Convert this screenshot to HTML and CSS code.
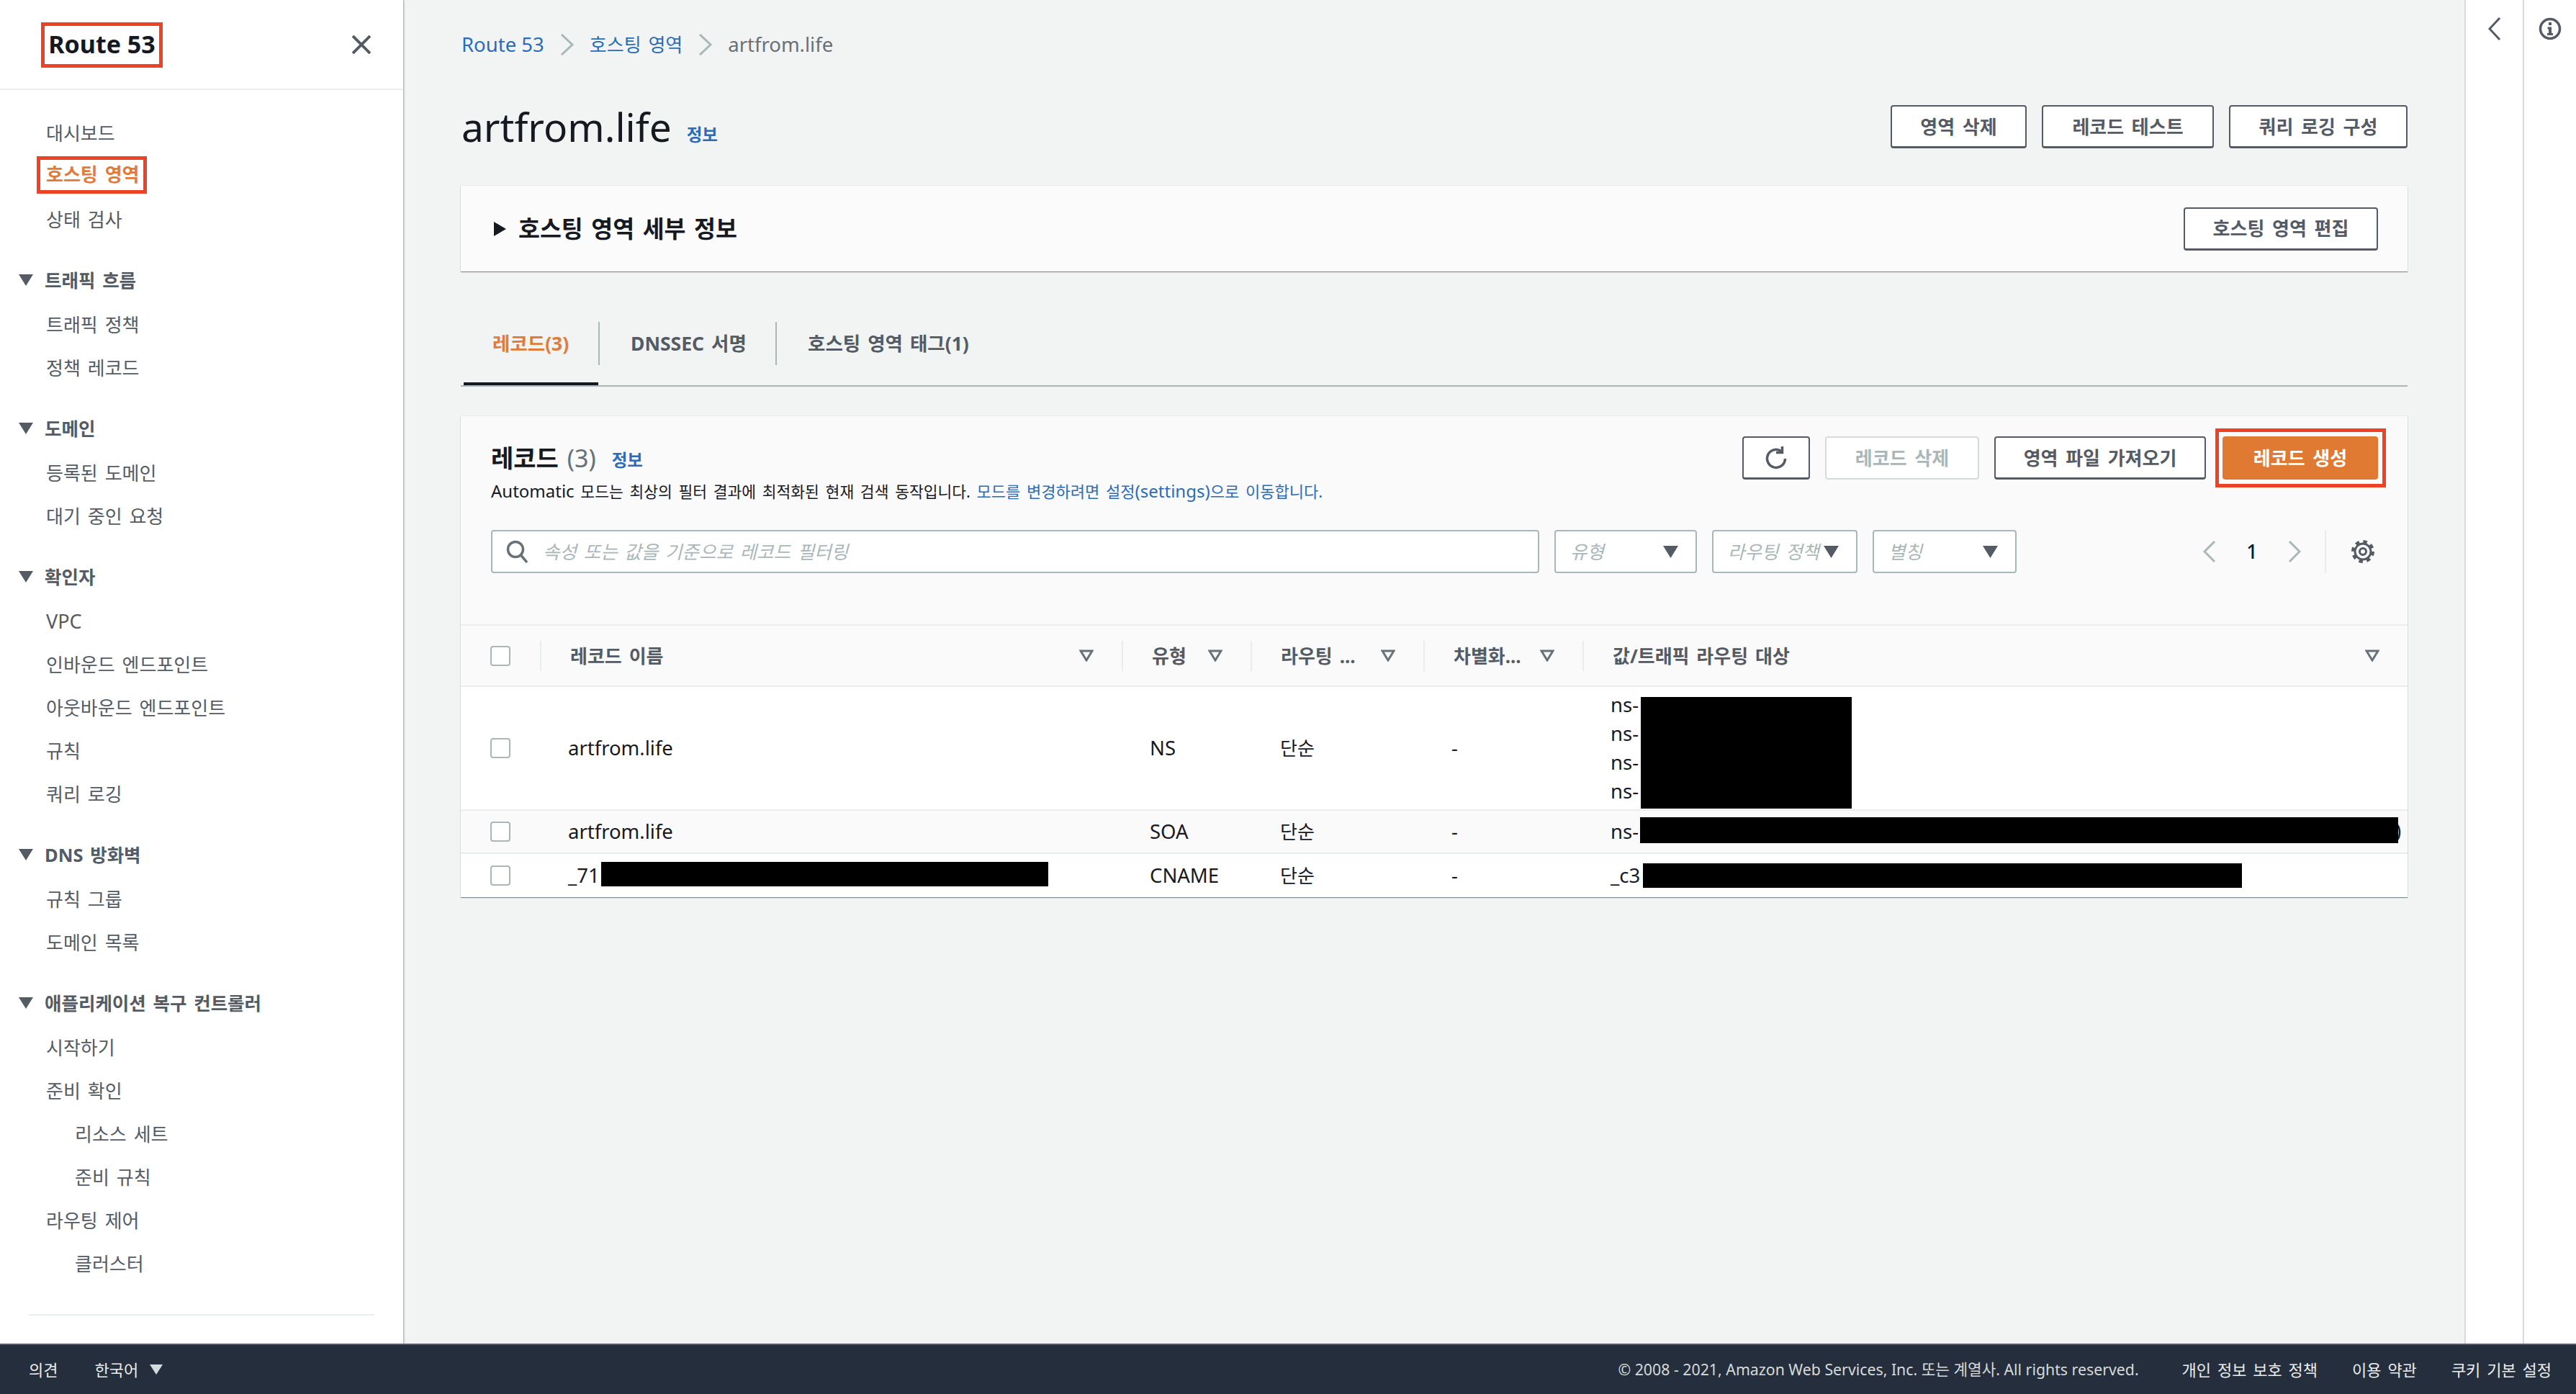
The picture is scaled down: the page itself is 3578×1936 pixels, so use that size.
FILE: index.html
```html
<!DOCTYPE html>
<html lang="ko">
<head>
<meta charset="utf-8">
<title>Route 53</title>
<link rel="stylesheet" href="styles.css">
</head>
<body>
<div class="app">
  <div class="top">
    <aside class="sidebar">
      <div class="side-head">
        <div class="side-title">Route 53</div>
        <svg class="close" viewBox="0 0 26 26"><path d="M1 1L25 25M25 1L1 25"/></svg>
      </div>
      <nav class="nav">
        <a class="item">대시보드</a>
        <a class="item"><span class="current">호스팅 영역</span></a>
        <a class="item">상태 검사</a>
        <div class="group"><svg class="tri" viewBox="0 0 20 16"><path d="M0 0H20L10 16Z"/></svg>트래픽 흐름</div>
        <a class="item">트래픽 정책</a>
        <a class="item">정책 레코드</a>
        <div class="group"><svg class="tri" viewBox="0 0 20 16"><path d="M0 0H20L10 16Z"/></svg>도메인</div>
        <a class="item">등록된 도메인</a>
        <a class="item">대기 중인 요청</a>
        <div class="group"><svg class="tri" viewBox="0 0 20 16"><path d="M0 0H20L10 16Z"/></svg>확인자</div>
        <a class="item item-latin">VPC</a>
        <a class="item">인바운드 엔드포인트</a>
        <a class="item">아웃바운드 엔드포인트</a>
        <a class="item">규칙</a>
        <a class="item">쿼리 로깅</a>
        <div class="group"><svg class="tri" viewBox="0 0 20 16"><path d="M0 0H20L10 16Z"/></svg>DNS 방화벽</div>
        <a class="item">규칙 그룹</a>
        <a class="item">도메인 목록</a>
        <div class="group"><svg class="tri" viewBox="0 0 20 16"><path d="M0 0H20L10 16Z"/></svg>애플리케이션 복구 컨트롤러</div>
        <a class="item">시작하기</a>
        <a class="item">준비 확인</a>
        <a class="item sub">리소스 세트</a>
        <a class="item sub">준비 규칙</a>
        <a class="item">라우팅 제어</a>
        <a class="item sub">클러스터</a>
      </nav>
      <div class="side-rule"></div>
    </aside>

    <main class="main">
      <div class="crumbs">
        <a class="link latin">Route 53</a>
        <svg class="crumb-sep" viewBox="0 0 20 30"><path d="M2 1L17 15L2 29"/></svg>
        <a class="link">호스팅 영역</a>
        <svg class="crumb-sep" viewBox="0 0 20 30"><path d="M2 1L17 15L2 29"/></svg>
        <span class="latin crumb-now">artfrom.life</span>
      </div>

      <div class="title-row">
        <h1 class="page-title">artfrom.life</h1>
        <a class="info info-title">정보</a>
        <div class="actions">
          <button class="btn w-189">영역 삭제</button>
          <button class="btn w-239">레코드 테스트</button>
          <button class="btn w-248">쿼리 로깅 구성</button>
        </div>
      </div>

      <section class="detail">
        <svg class="detail-tri" viewBox="0 0 17 20"><path d="M0 0L17 10L0 20Z"/></svg>
        <h2 class="detail-title">호스팅 영역 세부 정보</h2>
        <button class="btn w-270 push">호스팅 영역 편집</button>
      </section>

      <div class="tabs">
        <div class="tab tab-on">레코드(3)</div>
        <div class="tab tab-2">DNSSEC 서명</div>
        <div class="tab tab-3">호스팅 영역 태그(1)</div>
      </div>

      <section class="records">
        <div class="rec-head">
          <div class="rec-left">
            <div class="rec-title"><b class="rec-name">레코드</b><span class="rec-count">(3)</span><a class="info">정보</a></div>
            <p class="rec-desc"><span class="desc-latin">Automatic</span> 모드는 최상의 필터 결과에 최적화된 현재 검색 동작입니다. <a class="link"><span>모드를 변경하려면 설정</span><span class="desc-latin">(settings)</span><span>으로 이동합니다.</span></a></p>
          </div>
          <div class="rec-actions">
            <button class="btn w-94"><svg class="refresh" viewBox="0 0 32 32"><path d="M23 6.5A12.5 12.5 0 1 0 28.5 17"/><path d="M24.5 0V8.5H16"/></svg></button>
            <button class="btn btn-off w-214">레코드 삭제</button>
            <button class="btn w-294">영역 파일 가져오기</button>
            <div class="mark"><button class="btn btn-go w-216">레코드 생성</button></div>
          </div>
        </div>

        <div class="filters">
          <div class="search">
            <svg class="search-ico" viewBox="0 0 30 32"><circle cx="13" cy="13" r="10.5"/><path d="M20.5 21L29 31"/></svg>
            <span class="ph">속성 또는 값을 기준으로 레코드 필터링</span>
          </div>
          <div class="select w-198"><span class="ph">유형</span><svg class="caret" viewBox="0 0 21 17"><path d="M0 0H21L10.5 17Z"/></svg></div>
          <div class="select w-202"><span class="ph">라우팅 정책</span><svg class="caret" viewBox="0 0 21 17"><path d="M0 0H21L10.5 17Z"/></svg></div>
          <div class="select w-200"><span class="ph">별칭</span><svg class="caret" viewBox="0 0 21 17"><path d="M0 0H21L10.5 17Z"/></svg></div>
          <div class="pager">
            <svg class="page-chev" viewBox="0 0 18 30"><path d="M16 1L2 15L16 29"/></svg>
            <b class="page-no">1</b>
            <svg class="page-chev" viewBox="0 0 18 30"><path d="M2 1L16 15L2 29"/></svg>
            <span class="pager-rule"></span>
            <svg class="gear" viewBox="0 0 32 32"><circle class="gear-teeth" cx="16" cy="16" r="13.5"/><circle class="gear-ring" cx="16" cy="16" r="11"/><circle class="gear-hub" cx="16" cy="16" r="4.5"/></svg>
          </div>
        </div>

        <div class="thead">
          <div class="th th-cb"><span class="cb"></span></div>
          <div class="th"><span>레코드 이름</span><svg class="sort" viewBox="0 0 20 17"><path d="M2 2H18L10 15Z"/></svg></div>
          <div class="th"><span>유형</span><svg class="sort" viewBox="0 0 20 17"><path d="M2 2H18L10 15Z"/></svg></div>
          <div class="th"><span>라우팅 ...</span><svg class="sort" viewBox="0 0 20 17"><path d="M2 2H18L10 15Z"/></svg></div>
          <div class="th"><span>차별화...</span><svg class="sort" viewBox="0 0 20 17"><path d="M2 2H18L10 15Z"/></svg></div>
          <div class="th"><span>값/트래픽 라우팅 대상</span><svg class="sort" viewBox="0 0 20 17"><path d="M2 2H18L10 15Z"/></svg></div>
        </div>

        <div class="row row-tall">
          <div class="td td-cb"><span class="cb"></span></div>
          <div class="td latin">artfrom.life</div>
          <div class="td latin">NS</div>
          <div class="td kr">단순</div>
          <div class="td latin">-</div>
          <div class="td td-val latin">
            <div class="ns">
              <div>ns-</div><div>ns-</div><div>ns-</div><div>ns-</div>
            </div>
            <i class="mask mask-a"></i>
          </div>
        </div>
        <div class="row row-alt">
          <div class="td td-cb"><span class="cb"></span></div>
          <div class="td latin">artfrom.life</div>
          <div class="td latin">SOA</div>
          <div class="td kr">단순</div>
          <div class="td latin">-</div>
          <div class="td td-val latin">ns-<span class="peek">)</span><i class="mask mask-b"></i></div>
        </div>
        <div class="row row-last">
          <div class="td td-cb"><span class="cb"></span></div>
          <div class="td latin">_71<i class="mask mask-n"></i></div>
          <div class="td latin">CNAME</div>
          <div class="td kr">단순</div>
          <div class="td latin">-</div>
          <div class="td td-val latin">_c3<i class="mask mask-c"></i></div>
        </div>
      </section>
    </main>

    <div class="rail rail-a">
      <svg class="rail-chev" viewBox="0 0 18 32"><path d="M16 1L2 16L16 31"/></svg>
    </div>
    <div class="rail rail-b">
      <svg class="rail-info" viewBox="0 0 32 32"><circle cx="16" cy="16" r="13.5"/><path class="i-fill" d="M14 7h4v4h-4zM12.5 13.5H18V22h2v3h-8v-3h2v-5.500h-1.500z"/></svg>
    </div>
  </div>

  <footer class="footer">
    <a class="f-left">의견</a>
    <a class="f-left f-lang">한국어</a>
    <svg class="f-caret" viewBox="0 0 18 14"><path d="M0 0H18L9 14Z"/></svg>
    <span class="copy">© 2008 - 2021, Amazon Web Services, Inc. 또는 계열사. All rights reserved.</span>
    <a class="f-link f-first">개인 정보 보호 정책</a>
    <a class="f-link">이용 약관</a>
    <a class="f-link">쿠키 기본 설정</a>
  </footer>
</div>
</body>
</html>
```

FILE: styles.css
```css
* { box-sizing: border-box; }
html, body { margin: 0; height: 100%; }
body {
  font-family: "Noto Sans", "Noto Sans CJK KR", sans-serif;
  font-size: 26px;
  line-height: 32px;
  color: #16191f;
  background: #f2f3f3;
  word-spacing: .12em;
  overflow: hidden;
}
svg { display: block; flex: none; }
p, h1, h2 { margin: 0; }

.app { height: 100vh; display: flex; flex-direction: column; }
.top { flex: 1; min-height: 0; display: flex; }

/* sidebar */
.sidebar {
  width: 560px;
  flex: none;
  background: #fff;
  box-shadow: 1px 0 2px #9aa0a0;
}
.side-head {
  height: 125px;
  border-bottom: 2px solid #eaeded;
  display: flex;
  align-items: flex-start;
  padding: 31px 45px 0 57px;
  justify-content: space-between;
}
.side-title {
  width: 169px;
  height: 63px;
  border: 5px solid #ee4226;
  font-size: 34px;
  font-weight: 700;
  line-height: 50px;
  text-align: center;
  white-space: nowrap;
  word-spacing: 0;
}
.close { width: 26px; height: 26px; margin-top: 18px; fill: none; stroke: #545b64; stroke-width: 4; }
.nav { padding: 30px 0 0 26px; color: #545b64; }
.item { display: flex; height: 60px; align-items: center; padding-left: 38px; }
.item.sub { padding-left: 78px; }
.item-latin { font-size: 27px; }
.current {
  display: block;
  width: 153px;
  height: 52px;
  margin: -5px 0 0 -13px;
  padding-left: 8px;
  border: 5px solid #ee4226;
  color: #e07b39;
  font-weight: 700;
  line-height: 40px;
  white-space: nowrap;
}
.group { display: flex; align-items: center; height: 60px; margin-top: 24px; margin-bottom: 2px; font-size: 25.500px; font-weight: 700; }
.tri { width: 20px; height: 16px; margin-right: 16px; fill: #545b64; }
.side-rule { height: 2px; background: #eaeded; margin: 40px 40px 0; }

/* main */
.main { flex: 1; min-width: 0; padding: 42px 79px 0 80px; }
.crumbs { display: flex; align-items: center; height: 40px; padding-left: 1px; }
.link { color: #2b6cb8; }
.latin { font-size: 27.500px; word-spacing: 0; }
.crumb-sep { width: 20px; height: 30px; margin: 0 21px 0 22px; fill: none; stroke: #aab7b8; stroke-width: 3; }
.crumb-now { color: #687078; }

.title-row { display: flex; align-items: center; height: 60px; margin-top: 64px; }
.page-title { font-size: 55px; font-weight: 400; line-height: 60px; word-spacing: 0; margin-left: 1px; }
.info { color: #2b6cb8; font-size: 23.500px; font-weight: 700; word-spacing: 0; }
.info-title { margin: 22px 0 0 21px; }
.actions { margin-left: auto; display: flex; gap: 21px; }

.btn {
  display: flex;
  align-items: center;
  justify-content: center;
  height: 60px;
  padding: 0;
  background: #fff;
  border: 2px solid #545b64;
  border-bottom-width: 3px;
  border-radius: 4px;
  color: #545b64;
  font: 700 26px/32px "Noto Sans", "Noto Sans CJK KR", sans-serif;
  word-spacing: .15em;
}
.w-94 { width: 94px; }
.w-189 { width: 189px; }
.w-214 { width: 214px; }
.w-216 { width: 216px; }
.w-239 { width: 239px; }
.w-248 { width: 248px; }
.w-270 { width: 270px; }
.w-294 { width: 294px; }
.btn-off { border: 2px solid #d5dbdb; color: #aab7b8; }
.btn-go { background: #e07a33; border: none; color: #fff; }
.push { margin-left: auto; }
.refresh { width: 32px; height: 32px; fill: none; stroke: #545b64; stroke-width: 3.5; }
.mark { border: 5px solid #ee4226; padding: 6px 6px 6px 5px; margin: -11px -11px -11px -8px; }

.detail {
  display: flex;
  align-items: center;
  height: 119px;
  margin-top: 52px;
  padding: 0 41px 0 46px;
  background: #fbfbfb;
  box-shadow: 0 1px 1px rgba(0, 28, 36, .45), 0 0 1px rgba(0, 28, 36, .2);
}
.detail-tri { width: 17px; height: 20px; fill: #16191f; }
.detail-title { font-size: 32.500px; font-weight: 700; line-height: 40px; margin-left: 17px; }

.tabs {
  display: flex;
  align-items: flex-start;
  height: 90px;
  margin-top: 70px;
  border-bottom: 2px solid #aab7b8;
  font-size: 26.500px;
  font-weight: 700;
  color: #545b64;
}
.tab { height: 60px; line-height: 60px; white-space: nowrap; }
.tab-on {
  position: relative;
  width: 193px;
  padding-left: 44px;
  color: #e07b39;
  border-right: 2px solid #aab7b8;
}
.tab-on::after {
  content: "";
  position: absolute;
  left: 4px;
  right: 0;
  top: 84px;
  height: 4px;
  background: #16191f;
}
.tab-2 { width: 246px; padding-left: 43px; border-right: 2px solid #aab7b8; }
.tab-3 { padding-left: 43px; }

.records {
  margin-top: 41px;
  background: #fafafa;
  box-shadow: 0 1px 1px rgba(0, 28, 36, .45), 0 0 1px rgba(0, 28, 36, .2);
}
.rec-head { display: flex; height: 158px; padding: 28px 41px 0 42px; }
.rec-title { display: flex; align-items: center; height: 60px; }
.rec-name { font-size: 34px; }
.rec-count { font-size: 34px; color: #687078; margin: 0 22px 0 12px; word-spacing: 0; }
.rec-title .info { margin-top: 6px; }
.rec-desc { font-size: 21.500px; line-height: 32px; color: #16191f; white-space: nowrap; }
.rec-desc .link { font-size: 22px; }
.desc-latin { font-size: 24px; word-spacing: 0; }
.rec-actions { margin-left: auto; display: flex; align-items: flex-start; gap: 21px; }

.filters { display: flex; gap: 21px; height: 60px; padding: 0 41px 0 42px; box-sizing: content-box; padding-bottom: 71px; }
.search, .select {
  display: flex;
  align-items: center;
  height: 60px;
  background: #fff;
  border: 2px solid #aab7b8;
  border-radius: 4px;
}
.search { width: 1456px; padding-left: 19px; }
.search-ico { width: 30px; height: 32px; margin-right: 21px; fill: none; stroke: #687078; stroke-width: 3.5; }
.ph { color: #aab7b8; font-size: 25.500px; font-style: italic; white-space: nowrap; }
.select { padding: 0 24px 0 20px; justify-content: space-between; }
.w-198 { width: 198px; }
.w-200 { width: 200px; }
.w-202 { width: 202px; }
.caret { width: 21px; height: 17px; fill: #545b64; }
.pager { margin-left: auto; display: flex; align-items: center; height: 60px; }
.page-chev { width: 18px; height: 30px; fill: none; stroke: #aab7b8; stroke-width: 3; }
.page-no { width: 18px; margin: 0 41px; font-size: 27px; font-weight: 500; text-align: center; }
.pager-rule { width: 2px; height: 60px; background: #eaeded; margin: 0 35px 0 33px; }
.gear { width: 32px; height: 32px; margin-right: 5px; fill: none; stroke: #545b64; }
.gear-teeth { stroke-width: 5; stroke-dasharray: 5.300 5.300; }
.gear-ring { stroke-width: 3; }
.gear-hub { stroke-width: 3; }

.thead, .row { display: grid; grid-template-columns: 110px 808px 179px 240px 221px 1fr; }
.thead {
  height: 87px;
  align-items: center;
  border-top: 2px solid #eaeded;
  border-bottom: 2px solid #eaeded;
  font-weight: 700;
  color: #545b64;
}
.th { display: flex; align-items: center; justify-content: space-between; height: 42px; padding: 0 39px 0 40px; border-left: 2px solid #eaeded; white-space: nowrap; }
.th-cb { border-left: 0; padding: 0 0 0 41px; justify-content: flex-start; }
.sort { width: 20px; height: 17px; fill: none; stroke: #687078; stroke-width: 3; }
.cb { display: block; width: 28px; height: 28px; background: #fff; border: 2px solid #aab7b8; border-radius: 4px; }

.row { background: #fff; height: 60px; border-bottom: 2px solid #eaeded; align-items: center; }
.row-tall { height: 172px; }
.row-alt { background: #fafafa; }
.row-last { border-bottom: 0; height: 60px; }
.td { position: relative; padding-left: 39px; white-space: nowrap; }
.td-cb { padding-left: 41px; }
.kr { padding-left: 41px; }
.ns { line-height: 40px; }
.mask { position: absolute; background: #000; }
.peek { position: absolute; left: 1129px; top: -1px; }
.mask-a { left: 81px; top: 9px; width: 293px; height: 155px; }
.mask-b { left: 80px; top: -4px; width: 1053px; height: 36px; }
.mask-c { left: 84px; top: -1px; width: 832px; height: 34px; }
.mask-n { left: 85px; top: -3px; width: 621px; height: 34px; }

/* rails */
.rail { flex: none; background: #fff; display: flex; justify-content: center; padding-top: 24px; }
.rail-a { width: 81px; border-left: 2px solid #d5dbdb; }
.rail-b { width: 74px; border-left: 2px solid #d5dbdb; }
.rail-chev { width: 18px; height: 32px; fill: none; stroke: #545b64; stroke-width: 3; }
.rail-info { width: 32px; height: 32px; fill: none; stroke: #545b64; stroke-width: 3.500; }
.i-fill { fill: #545b64; stroke: none; }

/* footer */
.footer {
  flex: none;
  display: flex;
  align-items: center;
  height: 70px;
  padding: 0 34px 0 40px;
  background: #252e3c;
  border-top: 2px solid #545b64;
  color: #eaeded;
  font-size: 22px;
}
.f-lang { margin-left: 51px; }
.f-caret { width: 18px; height: 14px; margin-left: 16px; fill: #d5dbdb; }
.copy { margin-left: auto; color: #d5dbdb; font-size: 21.300px; word-spacing: 0; }
.f-link { margin-left: 48px; }
.f-first { margin-left: 60px; }
```
